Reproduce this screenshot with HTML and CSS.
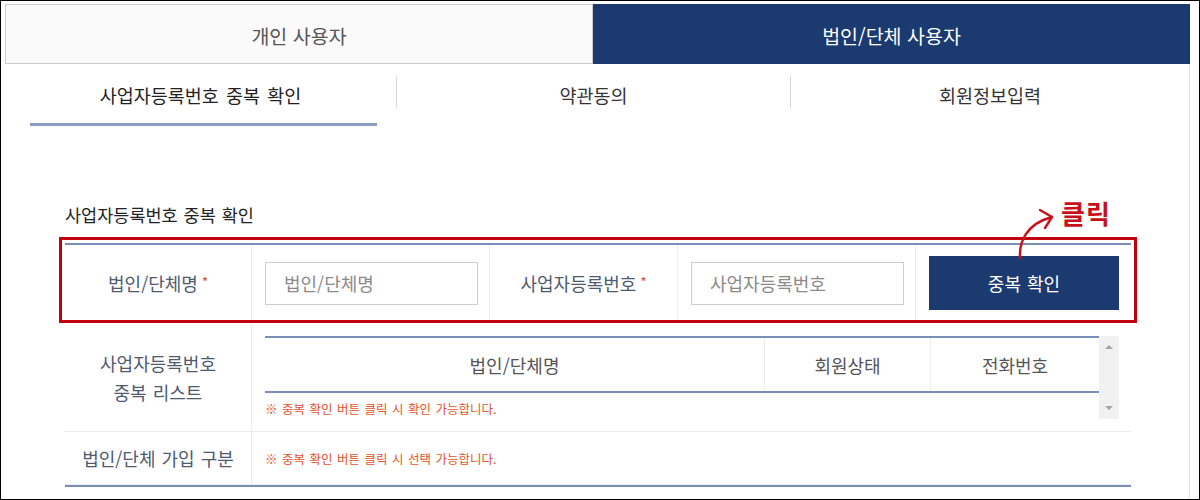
FILE: index.html
```html
<!DOCTYPE html>
<html lang="ko">
<head>
<meta charset="utf-8">
<title>회원가입</title>
<link rel="stylesheet" href="styles.css">
</head>
<body>
<div class="frame">
  <div class="tabs">
    <div class="tab tab-off">개인 사용자</div>
    <div class="tab tab-on">법인/단체 사용자</div>
  </div>
  <div class="content">
    <div class="steps">
      <div class="step">
        <div class="step-label step-active">사업자등록번호 중복 확인</div>
        <div class="step-bar"></div>
      </div>
      <div class="step">
        <div class="step-label step-sep">약관동의</div>
      </div>
      <div class="step">
        <div class="step-label step-sep">회원정보입력</div>
      </div>
    </div>

    <h2 class="section-title">사업자등록번호 중복 확인</h2>

    <div class="form-table">
      <div class="row row-check">
        <div class="cell label">법인/단체명<span class="req">*</span></div>
        <div class="cell field"><input class="text-input" type="text" placeholder="법인/단체명"></div>
        <div class="cell label">사업자등록번호<span class="req">*</span></div>
        <div class="cell field"><input class="text-input" type="text" placeholder="사업자등록번호"></div>
        <div class="cell field last"><button class="btn-check" type="button">중복 확인</button></div>
      </div>
      <div class="row row-list">
        <div class="cell label label-multi">사업자등록번호<br>중복 리스트</div>
        <div class="cell list-cell">
          <div class="list-wrap">
            <div class="list">
              <div class="list-head">
                <div class="lh lh-name">법인/단체명</div>
                <div class="lh lh-status">회원상태</div>
                <div class="lh lh-phone">전화번호</div>
              </div>
              <div class="list-note">※ 중복 확인 버튼 클릭 시 확인 가능합니다.</div>
            </div>
            <div class="scrollbar">
              <span class="arrow-up"></span>
              <span class="arrow-down"></span>
            </div>
          </div>
        </div>
      </div>
      <div class="row row-type">
        <div class="cell label">법인/단체 가입 구분</div>
        <div class="cell note-cell">※ 중복 확인 버튼 클릭 시 선택 가능합니다.</div>
      </div>

      <div class="highlight-box"></div>
      <div class="click-note">클릭</div>
      <svg class="click-arrow" width="50" height="62" viewBox="0 0 50 62">
        <path d="M5 58 C4 42 11 24 37 17" fill="none" stroke="#c8101a" stroke-width="2.4" stroke-linecap="round"/>
        <path d="M25 10 L37 17 L30 28" fill="none" stroke="#c8101a" stroke-width="2.4" stroke-linecap="round" stroke-linejoin="round"/>
      </svg>
    </div>
  </div>
</div>
</body>
</html>
```

FILE: styles.css
```css
* { box-sizing: border-box; }

html, body {
  margin: 0;
  padding: 0;
  background: #fff;
}

body {
  font-family: "Noto Sans CJK KR", "Noto Sans", sans-serif;
  color: #333;
  word-spacing: 1px;
}

.frame {
  width: 1200px;
  height: 500px;
  border: 1px solid #000;
  padding: 3px 9px 0 4px;
  overflow: hidden;
  display: flex;
  flex-direction: column;
}

/* top tabs */
.tabs {
  display: flex;
  height: 60px;
  flex: none;
}

.tab {
  display: flex;
  align-items: center;
  justify-content: center;
  font-size: 19.5px;
  padding-top: 2px;
  word-spacing: 0;
}

.tab-off {
  width: 588px;
  background: #fafafa;
  border: 1px solid #cdcdcd;
  color: #555;
}

.tab-on {
  flex: 1;
  background: #1b3a70;
  color: #fff;
}

.content {
  flex: 1;
  border-right: 1px solid #e4e4e4;
}

/* steps */
.steps {
  display: grid;
  grid-template-columns: 391px 394px 1fr;
  margin-top: 12px;
}

.step-label {
  height: 32px;
  padding-top: 6px;
  line-height: 26px;
  text-align: center;
  font-size: 18.5px;
  color: #333;
  word-spacing: 2px;
}

.step-active {
  color: #222;
}

.step-sep {
  border-left: 1px solid #d6d6d6;
}

.step-bar {
  height: 3px;
  margin: 15px 19px 0 25px;
  background: #8c9dbf;
}

/* section title */
.section-title {
  margin: 78px 0 0 60px;
  font-size: 17.5px;
  line-height: 22px;
  font-weight: normal;
  color: #222;
}

/* form table */
.form-table {
  position: relative;
  margin: 17px 0 0 60px;
  width: 1066px;
  border-top: 2px solid #7a8fb5;
  border-bottom: 2px solid #7a8fb5;
}

.row {
  display: grid;
  border-bottom: 1px solid #ececec;
}

.row:last-of-type {
  border-bottom: none;
}

.row-check {
  grid-template-columns: 187px 238px 188px 238px 1fr;
  height: 77px;
}

.row-list {
  grid-template-columns: 187px 1fr;
  height: 110px;
}

.row-type {
  grid-template-columns: 187px 1fr;
  height: 53px;
}

.cell {
  display: flex;
  align-items: center;
  border-right: 1px solid #ececec;
}

.cell.last,
.list-cell,
.note-cell {
  border-right: none;
}

.label {
  justify-content: center;
  font-size: 18px;
  color: #4e5a70;
}

.label-multi {
  text-align: center;
  line-height: 29px;
  padding-top: 2px;
}

.req {
  color: #e0463a;
  font-size: 13px;
  margin-left: 4px;
  position: relative;
  top: -2px;
}

.field {
  padding-left: 13px;
}

.text-input {
  width: 213px;
  height: 43px;
  border: 1px solid #cfcfcf;
  padding: 0 0 0 18px;
  font-family: "Noto Sans CJK KR", "Noto Sans", sans-serif;
  font-size: 18px;
  color: #333;
  background: #fff;
  outline: none;
}

.text-input::placeholder {
  color: #8a8a8a;
}

.btn-check {
  width: 190px;
  height: 54px;
  border: none;
  background: #1b3a70;
  color: #fff;
  font-family: "Noto Sans CJK KR", "Noto Sans", sans-serif;
  font-size: 18px;
  word-spacing: 1px;
  padding: 0;
}

/* list */
.list-cell {
  padding: 14px 12px 12px 13px;
  align-items: stretch;
}

.list-wrap {
  display: flex;
  width: 100%;
  height: 83px;
}

.list {
  width: 834px;
}

.list-head {
  display: grid;
  grid-template-columns: 500px 166px 1fr;
  height: 57px;
  border-top: 2px solid #7a8fb5;
  border-bottom: 2px solid #7a8fb5;
}

.lh {
  display: flex;
  align-items: center;
  justify-content: center;
  font-size: 18px;
  color: #555;
}

.lh-name,
.lh-status {
  border-right: 1px solid #ececec;
}

.list-note,
.note-cell {
  font-size: 12.5px;
  color: #e5532e;
  word-spacing: 1px;
}

.list-note {
  padding-top: 7px;
  line-height: 18px;
}

.note-cell {
  padding-left: 13px;
}

.scrollbar {
  width: 20px;
  background: #f1f1f1;
  display: flex;
  flex-direction: column;
  align-items: center;
  justify-content: space-between;
  padding: 9px 0 9px;
}

.arrow-up,
.arrow-down {
  width: 0;
  height: 0;
  border-left: 4px solid transparent;
  border-right: 4px solid transparent;
}

.arrow-up {
  border-bottom: 4px solid #a6a6a6;
}

.arrow-down {
  border-top: 4px solid #a6a6a6;
}

/* annotation overlay */
.highlight-box {
  position: absolute;
  left: -6px;
  top: -8px;
  width: 1078px;
  height: 86px;
  border: 3px solid #c3000e;
  pointer-events: none;
}

.click-note {
  position: absolute;
  left: 996px;
  top: -49px;
  font-size: 26px;
  font-weight: bold;
  line-height: 34px;
  color: #c8101a;
  letter-spacing: 1px;
}

.click-arrow {
  position: absolute;
  left: 950px;
  top: -45px;
}
```
